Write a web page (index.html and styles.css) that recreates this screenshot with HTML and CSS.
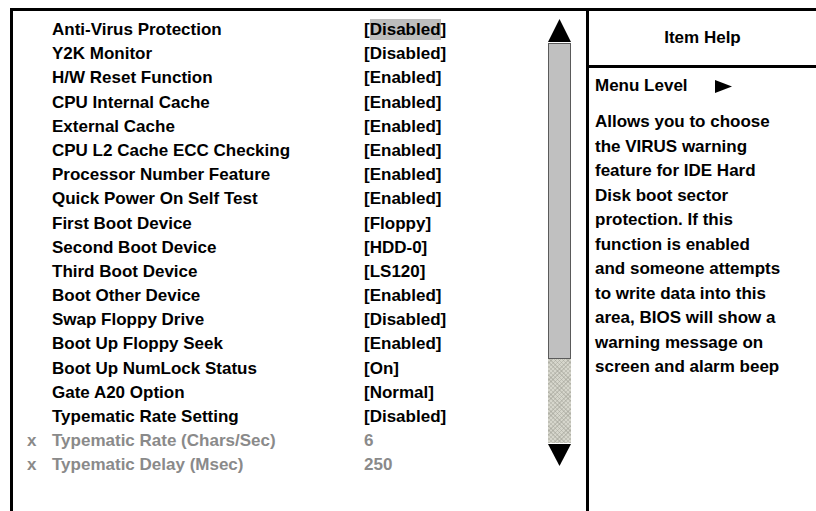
FILE: index.html
```html
<!DOCTYPE html>
<html lang="en">
<head>
    <meta charset="UTF-8">
    <title>Advanced BIOS Features</title>
    <link rel="stylesheet" href="styles.css">
</head>
<body>
    <div class="bios">
        <!-- Settings list with scrollbar -->
        <div class="main">
            <div class="list">
                <div class="row"><span class="mark"></span><span class="label">Anti-Virus Protection</span><span class="value">[<span class="sel">Disabled</span>]</span></div>
                <div class="row"><span class="mark"></span><span class="label">Y2K Monitor</span><span class="value">[Disabled]</span></div>
                <div class="row"><span class="mark"></span><span class="label">H/W Reset Function</span><span class="value">[Enabled]</span></div>
                <div class="row"><span class="mark"></span><span class="label">CPU Internal Cache</span><span class="value">[Enabled]</span></div>
                <div class="row"><span class="mark"></span><span class="label">External Cache</span><span class="value">[Enabled]</span></div>
                <div class="row"><span class="mark"></span><span class="label">CPU L2 Cache ECC Checking</span><span class="value">[Enabled]</span></div>
                <div class="row"><span class="mark"></span><span class="label">Processor Number Feature</span><span class="value">[Enabled]</span></div>
                <div class="row"><span class="mark"></span><span class="label">Quick Power On Self Test</span><span class="value">[Enabled]</span></div>
                <div class="row"><span class="mark"></span><span class="label">First Boot Device</span><span class="value">[Floppy]</span></div>
                <div class="row"><span class="mark"></span><span class="label">Second Boot Device</span><span class="value">[HDD-0]</span></div>
                <div class="row"><span class="mark"></span><span class="label">Third Boot Device</span><span class="value">[LS120]</span></div>
                <div class="row"><span class="mark"></span><span class="label">Boot Other Device</span><span class="value">[Enabled]</span></div>
                <div class="row"><span class="mark"></span><span class="label">Swap Floppy Drive</span><span class="value">[Disabled]</span></div>
                <div class="row"><span class="mark"></span><span class="label">Boot Up Floppy Seek</span><span class="value">[Enabled]</span></div>
                <div class="row"><span class="mark"></span><span class="label">Boot Up NumLock Status</span><span class="value">[On]</span></div>
                <div class="row"><span class="mark"></span><span class="label">Gate A20 Option</span><span class="value">[Normal]</span></div>
                <div class="row"><span class="mark"></span><span class="label">Typematic Rate Setting</span><span class="value">[Disabled]</span></div>
                <div class="row off"><span class="mark">x</span><span class="label">Typematic Rate (Chars/Sec)</span><span class="value">6</span></div>
                <div class="row off"><span class="mark">x</span><span class="label">Typematic Delay (Msec)</span><span class="value">250</span></div>
            </div>

            <div class="scrollbar">
                <svg class="arrow" width="23" height="24" viewBox="0 0 23 24"><polygon points="11.5,0 23,23 0,23" fill="#000"/></svg>
                <div class="thumb"></div>
                <div class="track"></div>
                <svg class="arrow" width="23" height="23" viewBox="0 0 23 23"><polygon points="0,0 23,0 11.5,22" fill="#000"/></svg>
            </div>
        </div>

        <!-- Help panel -->
        <div class="help">
            <div class="help-title">Item Help</div>
            <div class="help-body">
                <div class="menu-level">Menu Level
                    <svg class="level-arrow" width="17" height="13" viewBox="0 0 17 13"><polygon points="0,0 17,6.5 0,13" fill="#000"/></svg>
                </div>
                <p class="help-text">Allows you to choose the VIRUS warning feature for IDE Hard Disk boot sector protection. If this function is enabled and someone attempts to write data into this area, BIOS will show a warning message on screen and alarm beep</p>
            </div>
        </div>
    </div>
</body>
</html>
```

FILE: styles.css
```css
/* Page */
body {
    margin: 0;
    background-color: #fff;
    font-family: "Liberation Sans", Arial, sans-serif;
    font-weight: bold;
    font-size: 17px;
    color: #000;
}

.bios {
    display: flex;
    height: 500px;
    margin: 8px 0 0 10px;
    border-top: 3px solid #000;
    border-left: 3px solid #000;
}

/* Left side */
.main {
    display: flex;
    width: 573px;
}

.list {
    width: 535px;
    padding-top: 7px;
}

.row {
    display: flex;
    height: 24.2px;
    line-height: 24.2px;
    white-space: nowrap;
}

.mark {
    width: 25px;
    padding-left: 14px;
}

.label {
    width: 312px;
}

.sel {
    background-color: #bdbdbd;
    padding: 1px 0;
}

.row.off {
    color: #8a8a8a;
}

/* Scrollbar */
.scrollbar {
    display: flex;
    flex-direction: column;
    width: 23px;
    padding-top: 8px;
}

.arrow {
    display: block;
}

.thumb {
    height: 314px;
    background-color: #c0c0c0;
    border: 1px solid #5a5a5a;
}

.track {
    height: 84px;
    margin-bottom: 1px;
    background-color: #d6d6cc;
    background-image:
        repeating-linear-gradient(45deg, rgba(150, 150, 140, 0.35) 0 1px, transparent 1px 3px),
        repeating-linear-gradient(-45deg, rgba(150, 150, 140, 0.35) 0 1px, transparent 1px 3px);
}

/* Help panel */
.help {
    flex: 1;
    border-left: 3px solid #000;
}

.help-title {
    height: 54px;
    line-height: 54px;
    text-align: center;
    border-bottom: 3px solid #000;
}

.help-body {
    padding: 6px 0 0 6px;
}

.menu-level {
    display: flex;
    align-items: center;
    height: 24px;
}

.level-arrow {
    margin-left: 27px;
}

.help-text {
    margin: 12px 0 0;
    width: 187px;
    line-height: 24.5px;
}
```
